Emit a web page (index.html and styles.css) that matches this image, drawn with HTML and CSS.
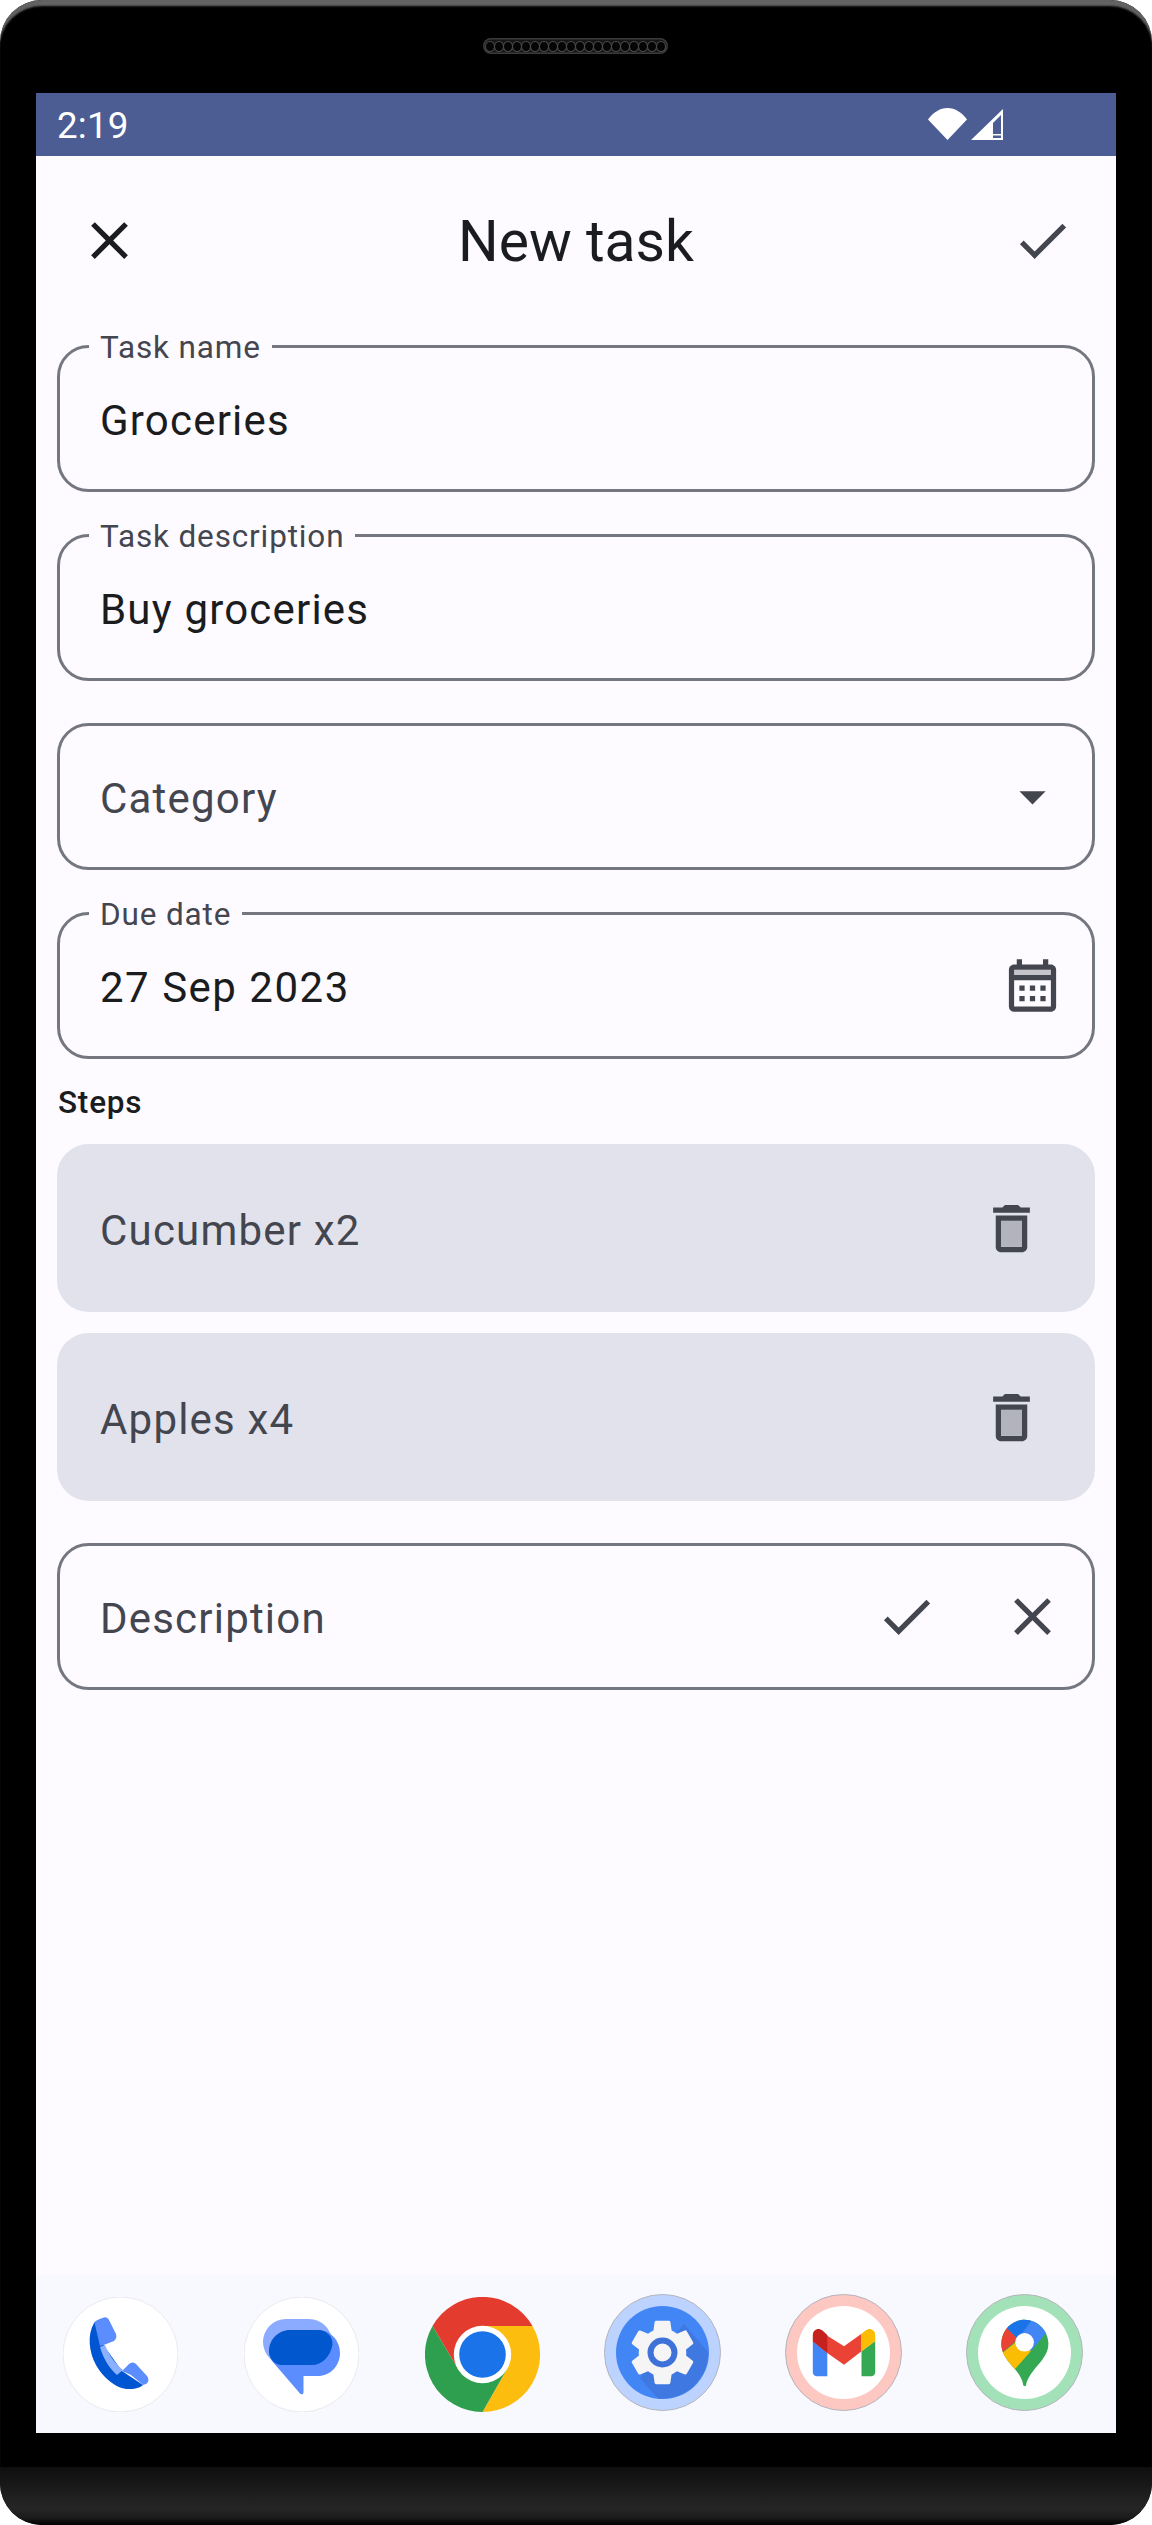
FILE: index.html
```html
<!DOCTYPE html>
<html lang="en">
<head>
<meta charset="utf-8">
<title>New task</title>
<link rel="stylesheet" href="styles.css">
</head>
<body>
<div class="device">
  <div class="earpiece-zone">
    <div class="earpiece">
      <i></i><i></i><i></i><i></i><i></i><i></i><i></i><i></i><i></i><i></i><i></i><i></i><i></i><i></i><i></i><i></i><i></i><i></i><i></i><i></i>
    </div>
  </div>
  <div class="screen">
    <div class="statusbar">
      <span class="clock">2:19</span>
      <div class="status-icons">
        <svg class="wifi" viewBox="0 0 39 32"><path d="M0 11.500C5 4.500 12 0 19.500 0S34 4.500 39 11.500L19.500 32z"/></svg>
        <svg class="signal" viewBox="0 0 32 31"><path fill-rule="evenodd" d="M32 0v31H0zM30 6 22 14V29H30z"/><path d="M22 26.500H30V25H22z"/></svg>
      </div>
    </div>
    <header class="topbar">
      <button class="icon-btn dark"><svg viewBox="0 0 24 24"><path d="M19 6.410 17.590 5 12 10.590 6.410 5 5 6.410 10.590 12 5 17.590 6.410 19 12 13.410 17.590 19 19 17.590 13.410 12z"/></svg></button>
      <h1 class="title">New task</h1>
      <button class="icon-btn"><svg viewBox="0 0 24 24"><path d="M9 16.170 4.830 12l-1.420 1.410L9 19 21 7l-1.410-1.410z"/></svg></button>
    </header>
    <main class="form">
      <div class="field"><span class="float-label">Task name</span><span class="value">Groceries</span></div>
      <div class="field"><span class="float-label">Task description</span><span class="value">Buy groceries</span></div>
      <div class="field"><span class="placeholder">Category</span>
        <button class="icon-btn"><svg viewBox="0 0 24 24"><path d="M7 10l5 5 5-5z"/></svg></button>
      </div>
      <div class="field"><span class="float-label">Due date</span><span class="value date">27 Sep 2023</span>
        <button class="icon-btn"><svg viewBox="0 -1 24 24"><path opacity=".3" d="M5 5h14v2H5z"/><path d="M19 3h-1V1h-2v2H8V1H6v2H5c-1.110 0-1.990.9-1.990 2L3 19a2 2 0 0 0 2 2h14c1.100 0 2-.9 2-2V5c0-1.100-.9-2-2-2zm0 16H5V9h14v10zm0-12H5V5h14v2zM7 11h2v2H7zm4 0h2v2h-2zm4 0h2v2h-2zM7 15h2v2H7zm4 0h2v2h-2zm4 0h2v2h-2z"/></svg></button>
      </div>
      <div class="steps-title">Steps</div>
      <div class="step"><span class="placeholder">Cucumber x2</span>
        <button class="icon-btn"><svg viewBox="0 0 24 24"><path opacity=".3" d="M8 9h8v10H8z"/><path d="M15.500 4l-1-1h-5l-1 1H5v2h14V4zM6 19c0 1.100.9 2 2 2h8c1.100 0 2-.9 2-2V7H6v12zM8 9h8v10H8V9z"/></svg></button>
      </div>
      <div class="step"><span class="placeholder">Apples x4</span>
        <button class="icon-btn"><svg viewBox="0 0 24 24"><path opacity=".3" d="M8 9h8v10H8z"/><path d="M15.500 4l-1-1h-5l-1 1H5v2h14V4zM6 19c0 1.100.9 2 2 2h8c1.100 0 2-.9 2-2V7H6v12zM8 9h8v10H8V9z"/></svg></button>
      </div>
      <div class="field add-step"><span class="placeholder">Description</span>
        <button class="icon-btn"><svg viewBox="0 0 24 24"><path d="M9 16.170 4.830 12l-1.420 1.410L9 19 21 7l-1.410-1.410z"/></svg></button>
        <button class="icon-btn"><svg viewBox="0 0 24 24"><path d="M19 6.410 17.590 5 12 10.590 6.410 5 5 6.410 10.590 12 5 17.590 6.410 19 12 13.410 17.590 19 19 17.590 13.410 12z"/></svg></button>
      </div>
    </main>
    <nav class="dock">
      <svg class="app" viewBox="0 0 115 115">
        <circle cx="57.500" cy="57.500" r="57.500" fill="#fff" stroke="#e9e9ef"/>
        <path fill="#0056d2" d="M44 21.700C39 21.700 33 23 31 26 24 38 26 55 33 68 41 82 55 93 67 92 73 92 78 90 80 88L59 74 41 49 38 40z"/>
        <path fill="#5c8dff" d="M31.500 25.500C34 23 38 21 41 20.500 43 20 45 21 46 23L53 37C54 40 53 42 51 44L42 47.500 37 49z"/>
        <path fill="#8ab0ff" d="M37 50 42 48C46 58 52 67 60 73L54 78C46 71 40 61 37 50z"/>
        <path fill="#5c8dff" d="M59 74 66 67C69 65 71 65 73 67L84 79C86 82 86 85 83 87L80 88 68 78 59 74z"/>
      </svg>
      <svg class="app" viewBox="0 0 115 115">
        <circle cx="57.500" cy="57.500" r="57.500" fill="#fff" stroke="#e9e9ef"/>
        <rect x="19" y="22" width="69" height="46" rx="23" fill="#8aabff"/>
        <path fill="#5c8dff" d="M47 33H74C86 33 96 43 96 56 96 69 86 79 74 79H59.500V95C59.500 97.500 57.500 98 56 96.500L28 64C26 61 25 58 25 55 25 43 35 33 47 33z"/>
        <path fill="#0057ce" d="M46 33H74C82 33 89 39 88.500 48 86 60 78 68 68 68H38C31 68 25 62 25 54 25 42 35 33 46 33z"/>
      </svg>
      <svg class="app" viewBox="0 0 115 115">
        <path fill="#e33b2e" d="M7.500 29A57.500 57.500 0 0 1 107.500 29H57.500L33 72z"/>
        <path fill="#fdbd0f" d="M107.500 29A57.500 57.500 0 0 1 57.500 115L82 72 57.500 29z"/>
        <path fill="#2e9e4f" d="M57.500 115A57.500 57.500 0 0 1 7.500 29L33 72H82z"/>
        <circle cx="57.500" cy="57.500" r="28.700" fill="#fff"/>
        <circle cx="57.500" cy="57.500" r="23.300" fill="#1a73e8"/>
      </svg>
      <svg class="app ring" viewBox="0 0 117 117">
        <circle cx="58.500" cy="58.500" r="58" fill="#bbd3fe" stroke="#b5b5bb"/>
        <circle cx="58.500" cy="58.500" r="46.500" fill="#4285f4"/>
        <path fill="#3f78e0" d="M80 30 104 58A46.500 46.500 0 0 1 54 104.500L36 84z"/>
        <g transform="translate(18.900 18.900) scale(3.300)">
          <path fill="#f5f5f5" d="M19.140 12.940c.04-.3.06-.61.06-.94 0-.32-.02-.64-.07-.94l2.030-1.580a.49.49 0 0 0 .12-.61l-1.920-3.320a.488.488 0 0 0-.59-.22l-2.390.96c-.5-.38-1.030-.7-1.620-.94l-.36-2.540a.484.484 0 0 0-.48-.41h-3.840c-.24 0-.43.17-.47.41l-.36 2.540c-.59.24-1.130.57-1.620.94l-2.390-.96c-.22-.08-.47 0-.59.22L2.740 8.870c-.12.21-.08.47.12.61l2.030 1.580c-.05.3-.09.63-.09.94s.02.64.07.94l-2.030 1.580a.49.49 0 0 0-.12.61l1.920 3.320c.12.22.37.29.59.22l2.390-.96c.5.38 1.030.7 1.620.94l.36 2.540c.05.24.24.41.48.41h3.840c.24 0 .44-.17.47-.41l.36-2.540c.59-.24 1.130-.56 1.620-.94l2.390.96c.22.08.47 0 .59-.22l1.920-3.320c.12-.22.07-.47-.12-.61l-2.010-1.580z"/>
        </g>
        <circle cx="58.500" cy="58.500" r="12" fill="#f5f5f5" stroke="#3f72d8" stroke-width="6"/>
      </svg>
      <svg class="app ring" viewBox="0 0 117 117">
        <circle cx="58.500" cy="58.500" r="58" fill="#fdc7c2" stroke="#b5b5bb"/>
        <circle cx="58.500" cy="58.500" r="46.500" fill="#fff"/>
        <path fill="#4285f4" d="M27.800 47V78.300C27.800 80.500 29.500 82.300 32 82.300H42.300V59z"/>
        <path fill="#34a853" d="M76.500 57.300 90.200 47V78.300C90.200 80.500 88.500 82.300 86 82.300H76.500z"/>
        <path fill="#ea4335" d="M42.300 41.700 59 52.300 76.500 39.700V57.300L59 70.700 42.300 59 27.800 47.300 35 38z"/>
        <path fill="#c5221f" d="M27.800 47.300V41C27.800 35.500 33.500 33 37.500 36.500L42.300 41V59z"/>
        <path fill="#fbbc04" d="M76.500 39.700 80.500 36.500C84.500 33 90.200 35.500 90.200 41V47.300L76.500 57.300z"/>
      </svg>
      <svg class="app ring" viewBox="0 0 117 117">
        <defs><clipPath id="pin"><path d="M58.600 25.700C45 25.700 35.300 37 35.300 50 35.300 58 40 65 46 72 52 78 56.500 85 57 90 57.300 93 60 93 60.300 90 61 85 66 78 72 71 78 64 82.400 58 82.400 49.500 82.400 37 72 25.700 58.600 25.700z"/></clipPath></defs>
        <circle cx="58.500" cy="58.500" r="58" fill="#a3e2b8" stroke="#b5b5bb"/>
        <circle cx="58.500" cy="58.500" r="46.500" fill="#fff"/>
        <g clip-path="url(#pin)">
          <rect x="30" y="20" width="60" height="80" fill="#34a853"/>
          <path fill="#fbbc04" d="M30 64 55 44 65 57 49 75 40 78z"/>
          <path fill="#ea4335" d="M30 28 40.800 34 52 45 30 64z"/>
          <path fill="#1a73e8" d="M40.800 34 52 45 70 22 40 20z"/>
          <path fill="#4285f4" d="M70 20H90L79.400 39.700 65 57 52 45z"/>
        </g>
        <circle cx="58.600" cy="48.300" r="9.300" fill="#fff"/>
      </svg>
    </nav>
  </div>
  <div class="chin"></div>
</div>
</body>
</html>
```
FILE: styles.css
```css
* { box-sizing: border-box; }
html, body { margin: 0; padding: 0; background: #fff; }
body { font-family: Roboto, "Noto Sans", sans-serif; }
.device {
  width: 1152px;
  height: 2525px;
  background: #000;
  border-radius: 42px;
  overflow: hidden;
  display: flex;
  flex-direction: column;
  box-shadow: inset 0 7px 2px -1px #626262;
}
.earpiece-zone {
  height: 93px;
  flex: none;
  padding-top: 38px;
  display: flex;
  justify-content: center;
}
.earpiece {
  width: 185px;
  height: 16px;
  margin-left: -1px;
  border-radius: 8px;
  background: #161616;
  box-shadow: inset 0 0 0 1.500px #3a3a3a;
  display: flex;
  align-items: center;
  justify-content: space-between;
  padding: 0 3px;
}
.earpiece i {
  width: 8px;
  height: 9px;
  border-radius: 50%;
  background: #050505;
  box-shadow: 0 0 0 1px #4a4a4a;
}
.screen {
  height: 2340px;
  flex: none;
  margin: 0 36px;
  background: #fdfbff;
  display: flex;
  flex-direction: column;
}
.statusbar {
  height: 63px;
  flex: none;
  background: #4b5d92;
  display: flex;
  align-items: center;
  justify-content: space-between;
  padding: 0 113px 0 21px;
  color: #fff;
}
.clock { font-size: 36.750px; line-height: 1; padding-top: 3px; letter-spacing: .2px; }
.status-icons { display: flex; gap: 4px; align-items: center; margin-top: -1px; }
.status-icons svg { fill: #fff; display: block; }
.wifi { width: 39px; height: 32px; }
.signal { width: 32px; height: 31px; }
.topbar {
  height: 168px;
  flex: none;
  display: flex;
  align-items: center;
  justify-content: space-between;
  padding: 0 10.500px;
}
.title {
  margin: 0;
  padding-top: 2px;
  font-weight: 400;
  font-size: 57px;
  color: #1a1c1e;
}
.icon-btn {
  width: 126px;
  height: 126px;
  border: 0;
  padding: 0;
  background: none;
  display: flex;
  align-items: center;
  justify-content: center;
  flex: none;
}
.icon-btn svg { width: 63px; height: 63px; fill: #44464f; display: block; overflow: visible; }
.icon-btn.dark svg { fill: #1a1c1e; }
.form {
  flex: 1;
  padding: 21px 21px 0;
  display: flex;
  flex-direction: column;
}
.field {
  position: relative;
  height: 147px;
  flex: none;
  margin-bottom: 42px;
  border: 3px solid #74777f;
  border-radius: 31.500px;
  display: flex;
  align-items: center;
  padding: 0 0 0 40px;
  font-size: 42px;
  letter-spacing: 1.200px;
}
.field .icon-btn:first-of-type { margin-left: auto; }
.field .icon-btn:last-child { margin-right: -3px; }
.float-label {
  position: absolute;
  top: -18.500px;
  left: 29px;
  padding: 0 11px;
  background: #fdfbff;
  font-size: 31.500px;
  line-height: 36px;
  letter-spacing: .85px;
  color: #44464f;
}
.value { color: #1a1c1e; padding-top: 3px; }
.value.date { letter-spacing: 1.500px; }
.placeholder { color: #44464f; letter-spacing: 1.200px; font-size: 42px; padding-top: 3px; }
.steps-title {
  margin: -24px 0 15px 1px;
  font-size: 31.500px;
  font-weight: 500;
  line-height: 52px;
  letter-spacing: .8px;
  color: #1a1c1e;
}
.step {
  height: 168px;
  flex: none;
  margin-bottom: 21px;
  background: #e1e2ec;
  border-radius: 31.500px;
  display: flex;
  align-items: center;
  padding: 0 21px 0 43px;
}
.step .placeholder { padding-top: 5px; }
.step .icon-btn { margin-left: auto; }
.add-step { margin-top: 21px; margin-bottom: 0; }
.dock {
  height: 158px;
  flex: none;
  background: #f8f8ff;
  display: flex;
  align-items: center;
  gap: 66px;
  padding-left: 27px;
}
.app { width: 115px; height: 115px; display: block; flex: none; }
.app.ring { width: 117px; height: 117px; margin: -3px 0 0 -2px; }
.chin {
  height: 58px;
  flex: none;
  margin-top: 34px;
  background: linear-gradient(#0e0e0e 0%, #262626 72%, #1a1a1a 88%, #000 100%);
}
```
